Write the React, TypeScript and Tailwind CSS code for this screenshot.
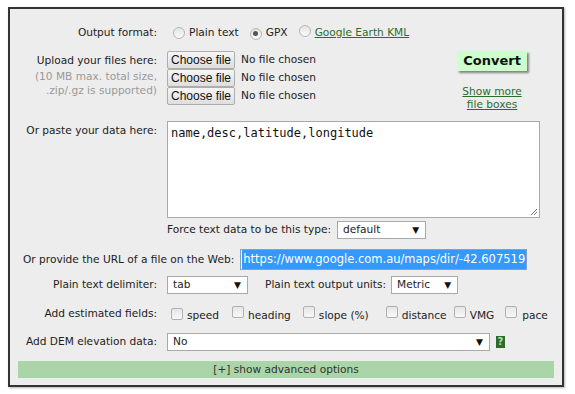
import React from "react";

const F = { fontFamily: '"DejaVu Sans", Verdana, sans-serif' };

function Radio({ checked }: { checked?: boolean }) {
  return (
    <span className="inline-flex h-[12px] w-[12px] items-center justify-center rounded-full border border-[#b5b5b5] bg-gradient-to-b from-[#e4e4e4] to-[#fafafa]">
      {checked && <span className="h-[5px] w-[5px] rounded-full bg-[#555]" />}
    </span>
  );
}

function Check() {
  return <span className="inline-block h-[12px] w-[12px] rounded-[2px] border border-[#b0b0b0] bg-gradient-to-b from-[#e6e6e6] to-[#f8f8f8]" />;
}

function Select({ w, value }: { w: string; value: string }) {
  return (
    <div className={`flex h-[18px] items-center justify-between border border-[#a9a9a9] bg-white pl-[5px] pr-[6px] ${w}`}>
      <span>{value}</span>
      <span className="text-[9px] leading-none text-[#111]">▼</span>
    </div>
  );
}

function FileRow() {
  return (
    <div className="flex h-[18px] items-center">
      <div
        className="flex h-[18px] w-[68px] items-center justify-center rounded-[2px] border border-[#adadad] bg-gradient-to-b from-[#f6f6f6] to-[#dedede] text-[12px] text-[#111]"
        style={{ fontFamily: '"Liberation Sans", Arial, sans-serif' }}
      >
        Choose file
      </div>
      <span className="ml-[6px]">No file chosen</span>
    </div>
  );
}

export default function App() {
  return (
    <div className="h-[394px] w-[575px] bg-white pl-[8px] pt-[7px] text-[10.6px] text-[#222]" style={F}>
      <div className="w-[556px] border-2 border-[#333] bg-[#ededed] pb-[7px] pt-[16px] shadow-[1px_1px_2px_rgba(0,0,0,0.3)]">
        {/* Output format */}
        <div className="flex h-[16px] items-center">
          <div className="w-[147px] text-right">Output format:</div>
          <div className="ml-[16px] flex items-center">
            <Radio />
            <span className="ml-[4px]">Plain text</span>
            <span className="ml-[11px]"><Radio checked /></span>
            <span className="ml-[4px]">GPX</span>
            <span className="ml-[11px]"><Radio /></span>
            <span className="ml-[4px] text-[#2b6e2b] underline">Google Earth KML</span>
          </div>
        </div>

        {/* Upload */}
        <div className="mt-[10px] flex">
          <div className="w-[147px] text-right leading-[14px]">
            <div className="mt-[2px]">Upload your files here:</div>
            <div className="mt-[2px] text-[#999]">(10 MB max. total size,</div>
            <div className="text-[#999]">.zip/.gz is supported)</div>
          </div>
          <div className="ml-[10px] flex flex-col gap-[0px]">
            <FileRow />
            <FileRow />
            <FileRow />
          </div>
          <div className="ml-[138px] flex w-[76px] flex-col items-center">
            <div className="flex h-[20px] w-[70px] items-center justify-center bg-[#ccffcc] text-[13px] font-bold text-[#111] shadow-[2px_2px_2px_rgba(0,0,0,0.45)]">
              Convert
            </div>
            <div className="mt-[14px] text-center leading-[13px] text-[#2b6e2b] underline">
              Show more
              <br />
              file boxes
            </div>
          </div>
        </div>

        {/* Paste */}
        <div className="mt-[10px] flex">
          <div className="w-[147px] pt-[2px] text-right">Or paste your data here:</div>
          <div className="ml-[10px]">
            <div className="relative h-[97px] w-[373px] border border-[#a9a9a9] bg-white px-[3px] py-[4px] text-[12px] leading-[14px] text-[#111]" style={{ fontFamily: '"DejaVu Sans Mono", monospace' }}>
              name,desc,latitude,longitude
              <svg className="absolute bottom-[1px] right-[1px]" width="8" height="8" viewBox="0 0 8 8">
                <path d="M7 1L1 7M7 4L4 7" stroke="#777" strokeWidth="1" />
              </svg>
            </div>
            <div className="mt-[3px] flex items-center">
              <span>Force text data to be this type:</span>
              <span className="ml-[6px]"><Select w="w-[89px]" value="default" /></span>
            </div>
          </div>
        </div>

        {/* URL */}
        <div className="mt-[10px] flex h-[21px] items-center pl-[13px]">
          <span>Or provide the URL of a file on the Web:</span>
          <div className="ml-[6px] flex h-[21px] w-[287px] items-center overflow-hidden border border-[#7da2ce] bg-white px-[1px]">
            <span className="whitespace-nowrap bg-[#3399ff] px-[1px] py-[1px] text-[11.5px] text-white">
              https://www.google.com.au/maps/dir/-42.607519,147.8811
            </span>
          </div>
        </div>

        {/* Delimiter */}
        <div className="mt-[6px] flex h-[18px] items-center">
          <div className="w-[147px] text-right">Plain text delimiter:</div>
          <div className="ml-[10px] flex items-center">
            <Select w="w-[81px]" value="tab" />
            <span className="ml-[17px]">Plain text output units:</span>
            <span className="ml-[5px]"><Select w="w-[67px]" value="Metric" /></span>
          </div>
        </div>

        {/* Estimated */}
        <div className="mt-[12px] flex h-[16px] items-center">
          <div className="w-[147px] text-right">Add estimated fields:</div>
          <div className="ml-[14px] flex items-center">
            <Check /><span className="ml-[4px] mt-[3px]">speed</span>
            <span className="ml-[13px]"><Check /></span><span className="ml-[4px] mt-[3px]">heading</span>
            <span className="ml-[12px]"><Check /></span><span className="ml-[4px] mt-[3px]">slope (%)</span>
            <span className="ml-[17px]"><Check /></span><span className="ml-[4px] mt-[3px]">distance</span>
            <span className="ml-[7px]"><Check /></span><span className="ml-[4px] mt-[3px]">VMG</span>
            <span className="ml-[11px]"><Check /></span><span className="ml-[5px] mt-[3px]">pace</span>
          </div>
        </div>

        {/* DEM */}
        <div className="mt-[11px] flex h-[18px] items-center">
          <div className="w-[147px] text-right">Add DEM elevation data:</div>
          <div className="ml-[10px] flex items-center">
            <Select w="w-[323px]" value="No" />
            <span className="ml-[6px] flex h-[12px] w-[9px] items-center justify-center bg-[#2f6b2f] text-[10px] font-bold leading-none text-[#a8e6a8]">?</span>
          </div>
        </div>

        {/* Advanced bar */}
        <div className="mx-[8px] mt-[10px] flex h-[17px] items-center justify-center bg-[#a9d5a9] text-[#333]">
          [+] show advanced options
        </div>
      </div>
    </div>
  );
}
